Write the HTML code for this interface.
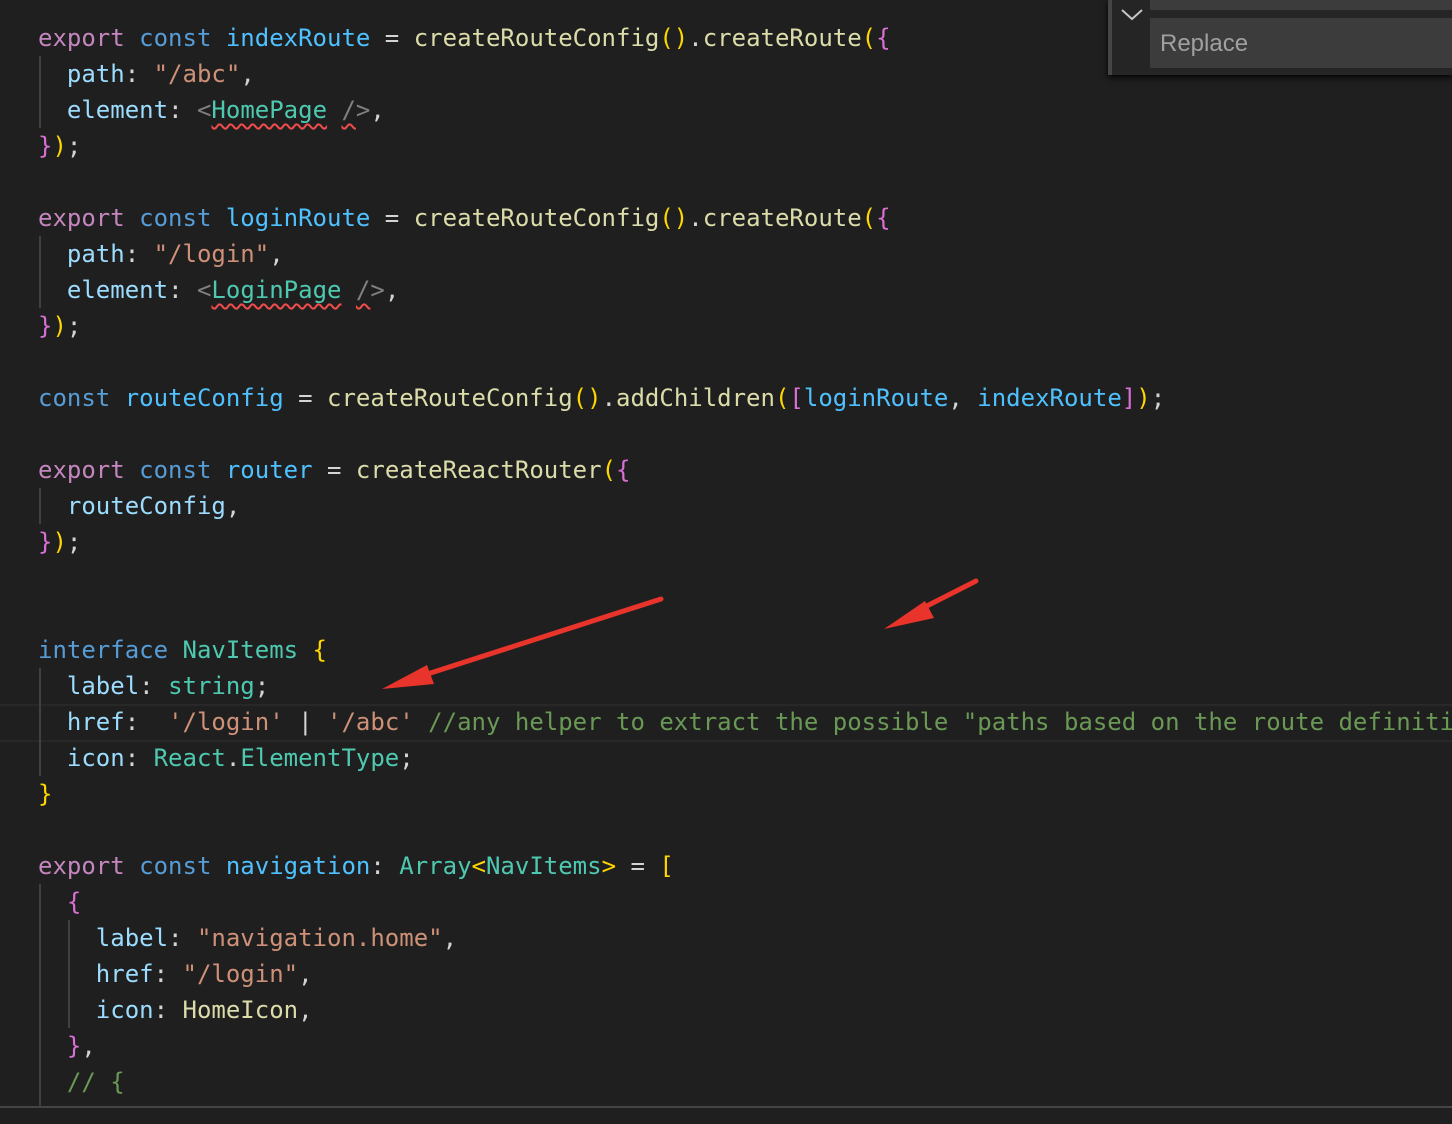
<!DOCTYPE html>
<html><head><meta charset="utf-8"><style>
html,body{margin:0;padding:0;background:#1f1f1f;width:1452px;height:1124px;overflow:hidden;position:relative}
.l{position:absolute;left:38px;height:36px;line-height:36px;font-family:"DejaVu Sans Mono","Liberation Mono",monospace;font-size:24px;white-space:pre;color:#d4d4d4}
.k{color:#c586c0}.c{color:#569cd6}.v{color:#4fc1ff}.p{color:#9cdcfe}.f{color:#dcdcaa}.s{color:#ce9178}.t{color:#4ec9b0}.y{color:#ffd700}.m{color:#da70d6}.b{color:#179fff}.g{color:#6a9955}.q{color:#808080}
.w{text-decoration:underline wavy #f14c4c;text-decoration-thickness:1.5px;text-underline-offset:5px}
.gd{position:absolute;width:2px;background:#404040}
</style></head><body>
<div style="position:absolute;left:0;top:704px;width:1452px;height:34px;border-top:2px solid #282828;border-bottom:2px solid #282828"></div>
<div class="gd" style="left:39px;top:56px;height:72px"></div>
<div class="gd" style="left:39px;top:236px;height:72px"></div>
<div class="gd" style="left:39px;top:488px;height:36px"></div>
<div class="gd" style="left:39px;top:668px;height:108px"></div>
<div class="gd" style="left:39px;top:884px;height:222px"></div>
<div class="gd" style="left:68px;top:920px;height:108px"></div>

<div class="l" style="top:20px"><span class="k">export</span> <span class="c">const</span> <span class="v">indexRoute</span> = <span class="f">createRouteConfig</span><span class="y">()</span>.<span class="f">createRoute</span><span class="y">(</span><span class="m">{</span></div>
<div class="l" style="top:56px">  <span class="p">path</span>: <span class="s">"/abc"</span>,</div>
<div class="l" style="top:92px">  <span class="p">element</span>: <span class="q">&lt;</span><span class="t w">HomePage</span> <span class="q w">/</span><span class="q">&gt;</span>,</div>
<div class="l" style="top:128px"><span class="m">}</span><span class="y">)</span>;</div>
<div class="l" style="top:200px"><span class="k">export</span> <span class="c">const</span> <span class="v">loginRoute</span> = <span class="f">createRouteConfig</span><span class="y">()</span>.<span class="f">createRoute</span><span class="y">(</span><span class="m">{</span></div>
<div class="l" style="top:236px">  <span class="p">path</span>: <span class="s">"/login"</span>,</div>
<div class="l" style="top:272px">  <span class="p">element</span>: <span class="q">&lt;</span><span class="t w">LoginPage</span> <span class="q w">/</span><span class="q">&gt;</span>,</div>
<div class="l" style="top:308px"><span class="m">}</span><span class="y">)</span>;</div>
<div class="l" style="top:380px"><span class="c">const</span> <span class="v">routeConfig</span> = <span class="f">createRouteConfig</span><span class="y">()</span>.<span class="f">addChildren</span><span class="y">(</span><span class="m">[</span><span class="v">loginRoute</span>, <span class="v">indexRoute</span><span class="m">]</span><span class="y">)</span>;</div>
<div class="l" style="top:452px"><span class="k">export</span> <span class="c">const</span> <span class="v">router</span> = <span class="f">createReactRouter</span><span class="y">(</span><span class="m">{</span></div>
<div class="l" style="top:488px">  <span class="p">routeConfig</span>,</div>
<div class="l" style="top:524px"><span class="m">}</span><span class="y">)</span>;</div>
<div class="l" style="top:632px"><span class="c">interface</span> <span class="t">NavItems</span> <span class="y">{</span></div>
<div class="l" style="top:668px">  <span class="p">label</span>: <span class="t">string</span>;</div>
<div class="l" style="top:704px">  <span class="p">href</span>:  <span class="s">'/login'</span> | <span class="s">'/abc'</span> <span class="g">//any helper to extract the possible "paths based on the route definitions</span></div>
<div class="l" style="top:740px">  <span class="p">icon</span>: <span class="t">React</span>.<span class="t">ElementType</span>;</div>
<div class="l" style="top:776px"><span class="y">}</span></div>
<div class="l" style="top:848px"><span class="k">export</span> <span class="c">const</span> <span class="v">navigation</span>: <span class="t">Array</span><span class="y">&lt;</span><span class="t">NavItems</span><span class="y">&gt;</span> = <span class="y">[</span></div>
<div class="l" style="top:884px">  <span class="m">{</span></div>
<div class="l" style="top:920px">    <span class="p">label</span>: <span class="s">"navigation.home"</span>,</div>
<div class="l" style="top:956px">    <span class="p">href</span>: <span class="s">"/login"</span>,</div>
<div class="l" style="top:992px">    <span class="p">icon</span>: <span class="f">HomeIcon</span>,</div>
<div class="l" style="top:1028px">  <span class="m">}</span>,</div>
<div class="l" style="top:1064px">  <span class="g">// {</span></div>

<div style="position:absolute;left:0;top:1106px;width:1452px;height:2px;background:#444"></div>

<div style="position:absolute;left:1108px;top:0;width:344px;height:75px;background:#252526;box-shadow:0 2px 6px #000"></div>
<div style="position:absolute;left:1108px;top:0;width:4px;height:75px;background:#454545"></div>
<svg style="position:absolute;left:1120px;top:6px" width="24" height="16"><path d="M2 4 L12 13 L22 4" stroke="#c5c5c5" stroke-width="2" fill="none"/></svg>
<div style="position:absolute;left:1150px;top:0;width:302px;height:10px;background:#3c3c3c"></div>
<div style="position:absolute;left:1150px;top:18px;width:302px;height:50px;background:#3c3c3c"></div>
<div style="position:absolute;left:1160px;top:26px;height:36px;line-height:36px;font-family:'Liberation Sans',sans-serif;font-size:24px;color:#a0a0a0">Replace</div>

<svg style="position:absolute;left:0;top:0" width="1452" height="1124">
<line x1="661" y1="599" x2="415" y2="678" stroke="#e8342a" stroke-width="5" stroke-linecap="round"/>
<polygon points="382,689 427,665 434,684" fill="#e8342a"/>
<line x1="976" y1="581" x2="915" y2="612" stroke="#e8342a" stroke-width="5" stroke-linecap="round"/>
<polygon points="884,629 925,601 934,618" fill="#e8342a"/>
</svg>
</body></html>
